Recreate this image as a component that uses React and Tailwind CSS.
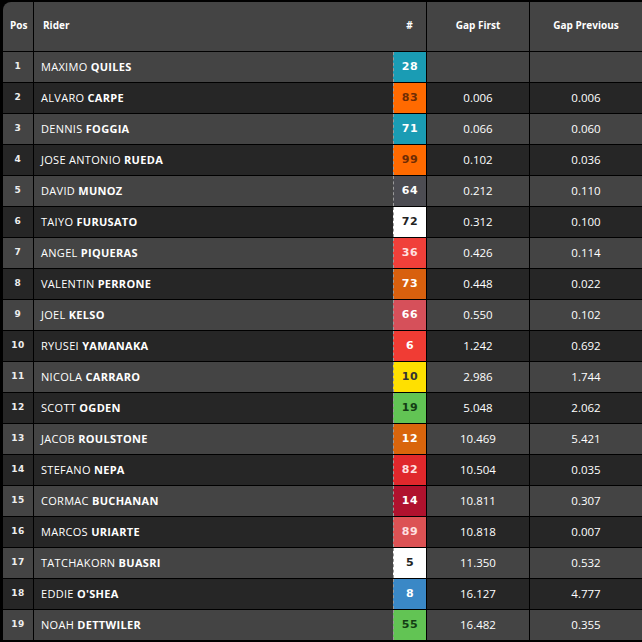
import React from 'react';

const RIDERS = [
  { pos: 1, first: 'MAXIMO', last: 'QUILES', num: '28', badge: 'bg-[#1a9cb4] text-white', gf: '', gp: '' },
  { pos: 2, first: 'ALVARO', last: 'CARPE', num: '83', badge: 'bg-[#ff6a00] text-[#6e2c05]', gf: '0.006', gp: '0.006' },
  { pos: 3, first: 'DENNIS', last: 'FOGGIA', num: '71', badge: 'bg-[#1a9cb4] text-white', gf: '0.066', gp: '0.060' },
  { pos: 4, first: 'JOSE ANTONIO', last: 'RUEDA', num: '99', badge: 'bg-[#ff6a00] text-[#6e2c05]', gf: '0.102', gp: '0.036' },
  { pos: 5, first: 'DAVID', last: 'MUNOZ', num: '64', badge: 'bg-[#4c4c52] text-white', gf: '0.212', gp: '0.110' },
  { pos: 6, first: 'TAIYO', last: 'FURUSATO', num: '72', badge: 'bg-white text-[#222]', gf: '0.312', gp: '0.100' },
  { pos: 7, first: 'ANGEL', last: 'PIQUERAS', num: '36', badge: 'bg-[#f0403a] text-[#ffe0e0]', gf: '0.426', gp: '0.114' },
  { pos: 8, first: 'VALENTIN', last: 'PERRONE', num: '73', badge: 'bg-[#d8600e] text-white', gf: '0.448', gp: '0.022' },
  { pos: 9, first: 'JOEL', last: 'KELSO', num: '66', badge: 'bg-[#d6505a] text-white', gf: '0.550', gp: '0.102' },
  { pos: 10, first: 'RYUSEI', last: 'YAMANAKA', num: '6', badge: 'bg-[#f03c34] text-white', gf: '1.242', gp: '0.692' },
  { pos: 11, first: 'NICOLA', last: 'CARRARO', num: '10', badge: 'bg-[#ffe000] text-[#333]', gf: '2.986', gp: '1.744' },
  { pos: 12, first: 'SCOTT', last: 'OGDEN', num: '19', badge: 'bg-[#62c454] text-[#143d14]', gf: '5.048', gp: '2.062' },
  { pos: 13, first: 'JACOB', last: 'ROULSTONE', num: '12', badge: 'bg-[#d9650c] text-white', gf: '10.469', gp: '5.421' },
  { pos: 14, first: 'STEFANO', last: 'NEPA', num: '82', badge: 'bg-[#e0282c] text-[#ffe0e0]', gf: '10.504', gp: '0.035' },
  { pos: 15, first: 'CORMAC', last: 'BUCHANAN', num: '14', badge: 'bg-[#b0122e] text-white', gf: '10.811', gp: '0.307' },
  { pos: 16, first: 'MARCOS', last: 'URIARTE', num: '89', badge: 'bg-[#dc5254] text-[#ffe0e0]', gf: '10.818', gp: '0.007' },
  { pos: 17, first: 'TATCHAKORN', last: 'BUASRI', num: '5', badge: 'bg-white text-[#222]', gf: '11.350', gp: '0.532' },
  { pos: 18, first: 'EDDIE', last: "O'SHEA", num: '8', badge: 'bg-[#3a88c6] text-white', gf: '16.127', gp: '4.777' },
  { pos: 19, first: 'NOAH', last: 'DETTWILER', num: '55', badge: 'bg-[#62c454] text-[#143d14]', gf: '16.482', gp: '0.355' },
];

const GRID = 'grid grid-cols-[30px_1fr_102px_112px] gap-x-px';

export default function App() {
  return (
    <div className="w-[642px] h-[642px] bg-black pt-[2px] pl-[3px] overflow-hidden font-['Open_Sans',sans-serif] text-white">
      <div className="flex flex-col gap-y-px rounded-tl-[8px] overflow-hidden">
        {/* Header */}
        <div className={`${GRID} h-[49px] text-[10px] font-bold`}>
          <div className="bg-[#444] flex items-center pl-[7px] pb-[2px]">Pos</div>
          <div className="bg-[#444] flex items-center pl-[9px] pb-[2px]">
            <span className="flex-1">Rider</span>
            <span className="w-[33px] text-center">#</span>
          </div>
          <div className="bg-[#444] flex items-center justify-center pb-[2px]">Gap First</div>
          <div className="bg-[#444] flex items-center justify-center pb-[2px]">Gap Previous</div>
        </div>

        {RIDERS.map(r => {
          const bg = r.pos % 2 === 1 ? 'bg-[#444]' : 'bg-[#262626]';
          return (
            <div key={r.pos} className={`${GRID} h-[30px] text-[11px]`}>
              <div className={`${bg} flex items-center justify-center font-['DejaVu_Sans',sans-serif] font-bold text-[9px] tracking-[0.5px] text-[#eee]`}>{r.pos}</div>
              <div className={`${bg} flex items-center pl-[7px]`}>
                <span className="flex-1 tracking-[0.3px]">
                  {r.first} <span className="font-bold">{r.last}</span>
                </span>
                <span className={`w-[33px] h-full flex items-center justify-center border-l border-dashed border-[#999] font-['DejaVu_Sans',sans-serif] font-bold text-[11px] tracking-[0.5px] ${r.badge}`}>
                  {r.num}
                </span>
              </div>
              <div className={`${bg} flex items-center justify-center text-[11.5px]`}>{r.gf}</div>
              <div className={`${bg} flex items-center justify-center text-[11.5px]`}>{r.gp}</div>
            </div>
          );
        })}
      </div>
    </div>
  );
}
